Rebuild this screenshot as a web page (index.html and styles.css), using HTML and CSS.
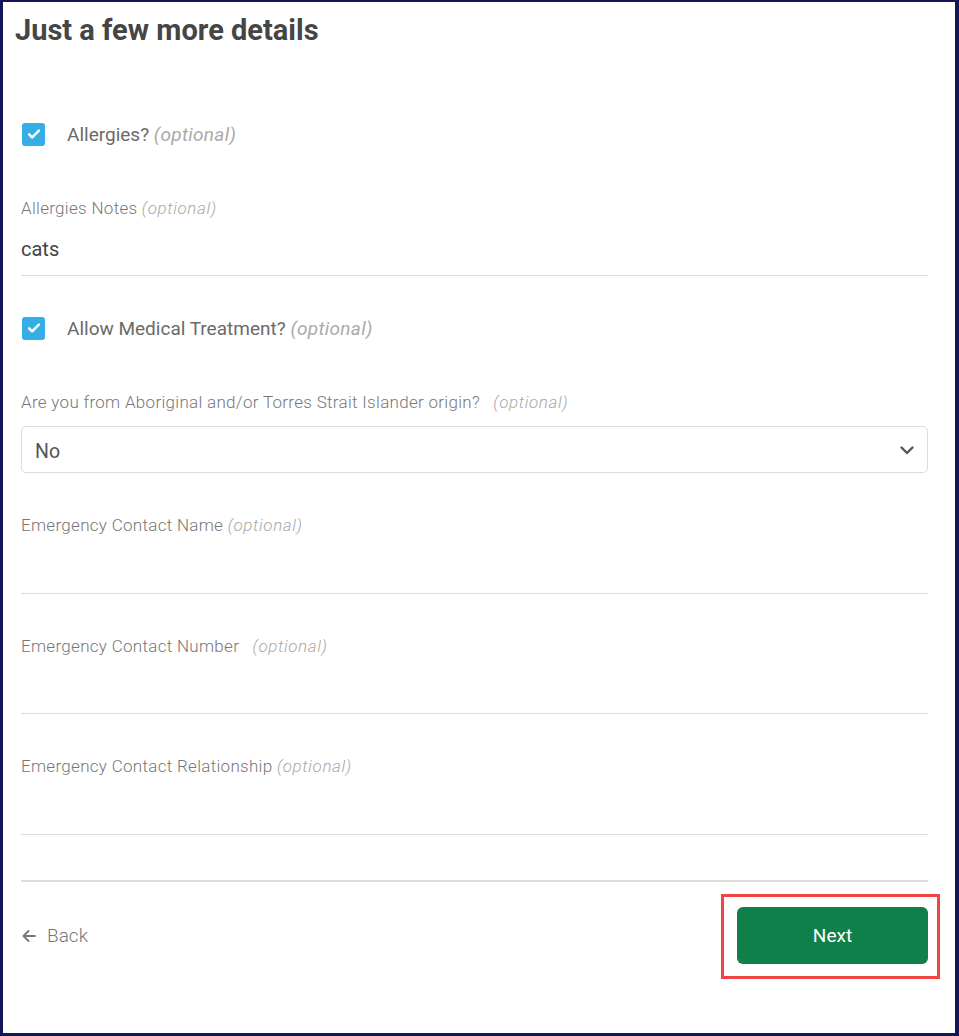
FILE: index.html
```html
<!DOCTYPE html>
<html>
<head>
<meta charset="utf-8">
<link rel="stylesheet" href="styles.css">
</head>
<body>
<div class="frame">
  <h1 class="title">Just a few more details</h1>
  <form class="form">
    <label class="check-row check-first">
      <span class="checkbox"><svg viewBox="0 0 24 24" width="18" height="18"><path d="M5.5 12.5l4 4L18.5 7.5" fill="none" stroke="#fff" stroke-width="3.4" stroke-linecap="round" stroke-linejoin="round"/></svg></span>
      <span class="check-label">Allergies? <em class="opt">(optional)</em></span>
    </label>

    <div class="field">
      <div class="field-label">Allergies Notes <em class="opt">(optional)</em></div>
      <div class="input input-short"><span class="value">cats</span></div>
    </div>

    <label class="check-row">
      <span class="checkbox"><svg viewBox="0 0 24 24" width="18" height="18"><path d="M5.5 12.5l4 4L18.5 7.5" fill="none" stroke="#fff" stroke-width="3.4" stroke-linecap="round" stroke-linejoin="round"/></svg></span>
      <span class="check-label">Allow Medical Treatment? <em class="opt">(optional)</em></span>
    </label>

    <div class="field field-select">
      <div class="field-label">Are you from Aboriginal and/or Torres Strait Islander origin? &nbsp;&nbsp;<em class="opt">(optional)</em></div>
      <div class="select">
        <span class="value">No</span>
        <svg class="chev" viewBox="0 0 16 16" width="16" height="16"><path d="M2.5 5.5L8 11l5.5-5.5" fill="none" stroke="#555" stroke-width="2.4" stroke-linecap="round" stroke-linejoin="round"/></svg>
      </div>
    </div>

    <div class="field">
      <div class="field-label">Emergency Contact Name <em class="opt">(optional)</em></div>
      <div class="input"></div>
    </div>

    <div class="field">
      <div class="field-label">Emergency Contact Number &nbsp;&nbsp;<em class="opt">(optional)</em></div>
      <div class="input input-short"></div>
    </div>

    <div class="field">
      <div class="field-label">Emergency Contact Relationship <em class="opt">(optional)</em></div>
      <div class="input"></div>
    </div>

    <div class="footer">
      <a class="back" href="#"><svg viewBox="0 0 16 16" width="16" height="16"><path d="M14 8H2.5M7.5 3L2.5 8l5 5" fill="none" stroke="#777" stroke-width="1.8" stroke-linecap="round" stroke-linejoin="round"/></svg><span>Back</span></a>
      <div class="next-wrap">
        <button type="button" class="next">Next</button>
      </div>
    </div>
  </form>
</div>
</body>
</html>
```

FILE: styles.css
```css
* { box-sizing: border-box; }
html, body { margin: 0; padding: 0; background: #fff; }
body { font-family: Roboto, "Noto Sans", "Liberation Sans", sans-serif; }

.frame {
  width: 959px;
  height: 1036px;
  border-style: solid;
  border-color: #131758;
  border-width: 2px 4px 3px 3px;
  background: #fff;
  overflow: hidden;
}

.title {
  margin: 0;
  padding: 12px 0 0 12px;
  font-size: 29px;
  line-height: 32px;
  font-weight: 700;
  color: #454545;
}

.form {
  padding: 0 27px 0 18px;
}

.check-row {
  display: flex;
  align-items: center;
  height: 24px;
}
.check-first { margin-top: 76px; }

.checkbox {
  width: 23px;
  height: 23px;
  margin-left: 1px;
  border-radius: 3px;
  background: #35ade5;
  display: flex;
  align-items: center;
  justify-content: center;
}

.check-label {
  margin-left: 22px;
  font-size: 19px;
  color: #6a6a6a;
}

.opt {
  font-style: italic;
  color: #aaa;
  font-weight: 400;
  letter-spacing: 0.3px;
}

.field { margin-top: 52px; }
.field + .field { margin-top: 42px; }
.field + .check-row { margin-top: 40px; }

.field-label {
  height: 20px;
  line-height: 20px;
  font-size: 17px;
  font-weight: 300;
  color: #777;
  letter-spacing: 0.3px;
}
.field-label .opt { font-weight: 300; color: #a8a8a8; letter-spacing: 0.6px; }

.input {
  height: 59px;
  border-bottom: 1px solid #dcdcdc;
  display: flex;
  align-items: center;
  padding-top: 5px;
}
.input-short { height: 58px; }

.value {
  font-size: 20px;
  color: #444;
}

.field-select .field-label { margin-bottom: 14px; }

.select {
  height: 47px;
  border: 1px solid #dcdcdc;
  border-radius: 5px;
  display: flex;
  align-items: center;
  justify-content: space-between;
  padding: 4px 12px 0 13px;
}
.select .value { color: #555; font-size: 19.5px; }
.select .chev { margin-top: -4px; }

.footer {
  margin-top: 45px;
  border-top: 2px solid #dcdcdc;
  display: flex;
  justify-content: space-between;
  align-items: center;
  padding-top: 25px;
  position: relative;
}

.back {
  display: flex;
  align-items: center;
  gap: 10px;
  text-decoration: none;
  color: #777;
  font-size: 19px;
  font-weight: 300;
}

.next-wrap {
  position: relative;
}
.next-wrap::before {
  content: "";
  position: absolute;
  left: -16px;
  top: -13px;
  right: -12px;
  bottom: -15px;
  border: 3px solid #f04545;
  pointer-events: none;
}

.next {
  width: 191px;
  height: 57px;
  border: 0;
  border-radius: 6px;
  background: #0f8049;
  color: #fff;
  font-family: Roboto, "Noto Sans", sans-serif;
  font-size: 19px;
  font-weight: 400;
  cursor: pointer;
}
```
